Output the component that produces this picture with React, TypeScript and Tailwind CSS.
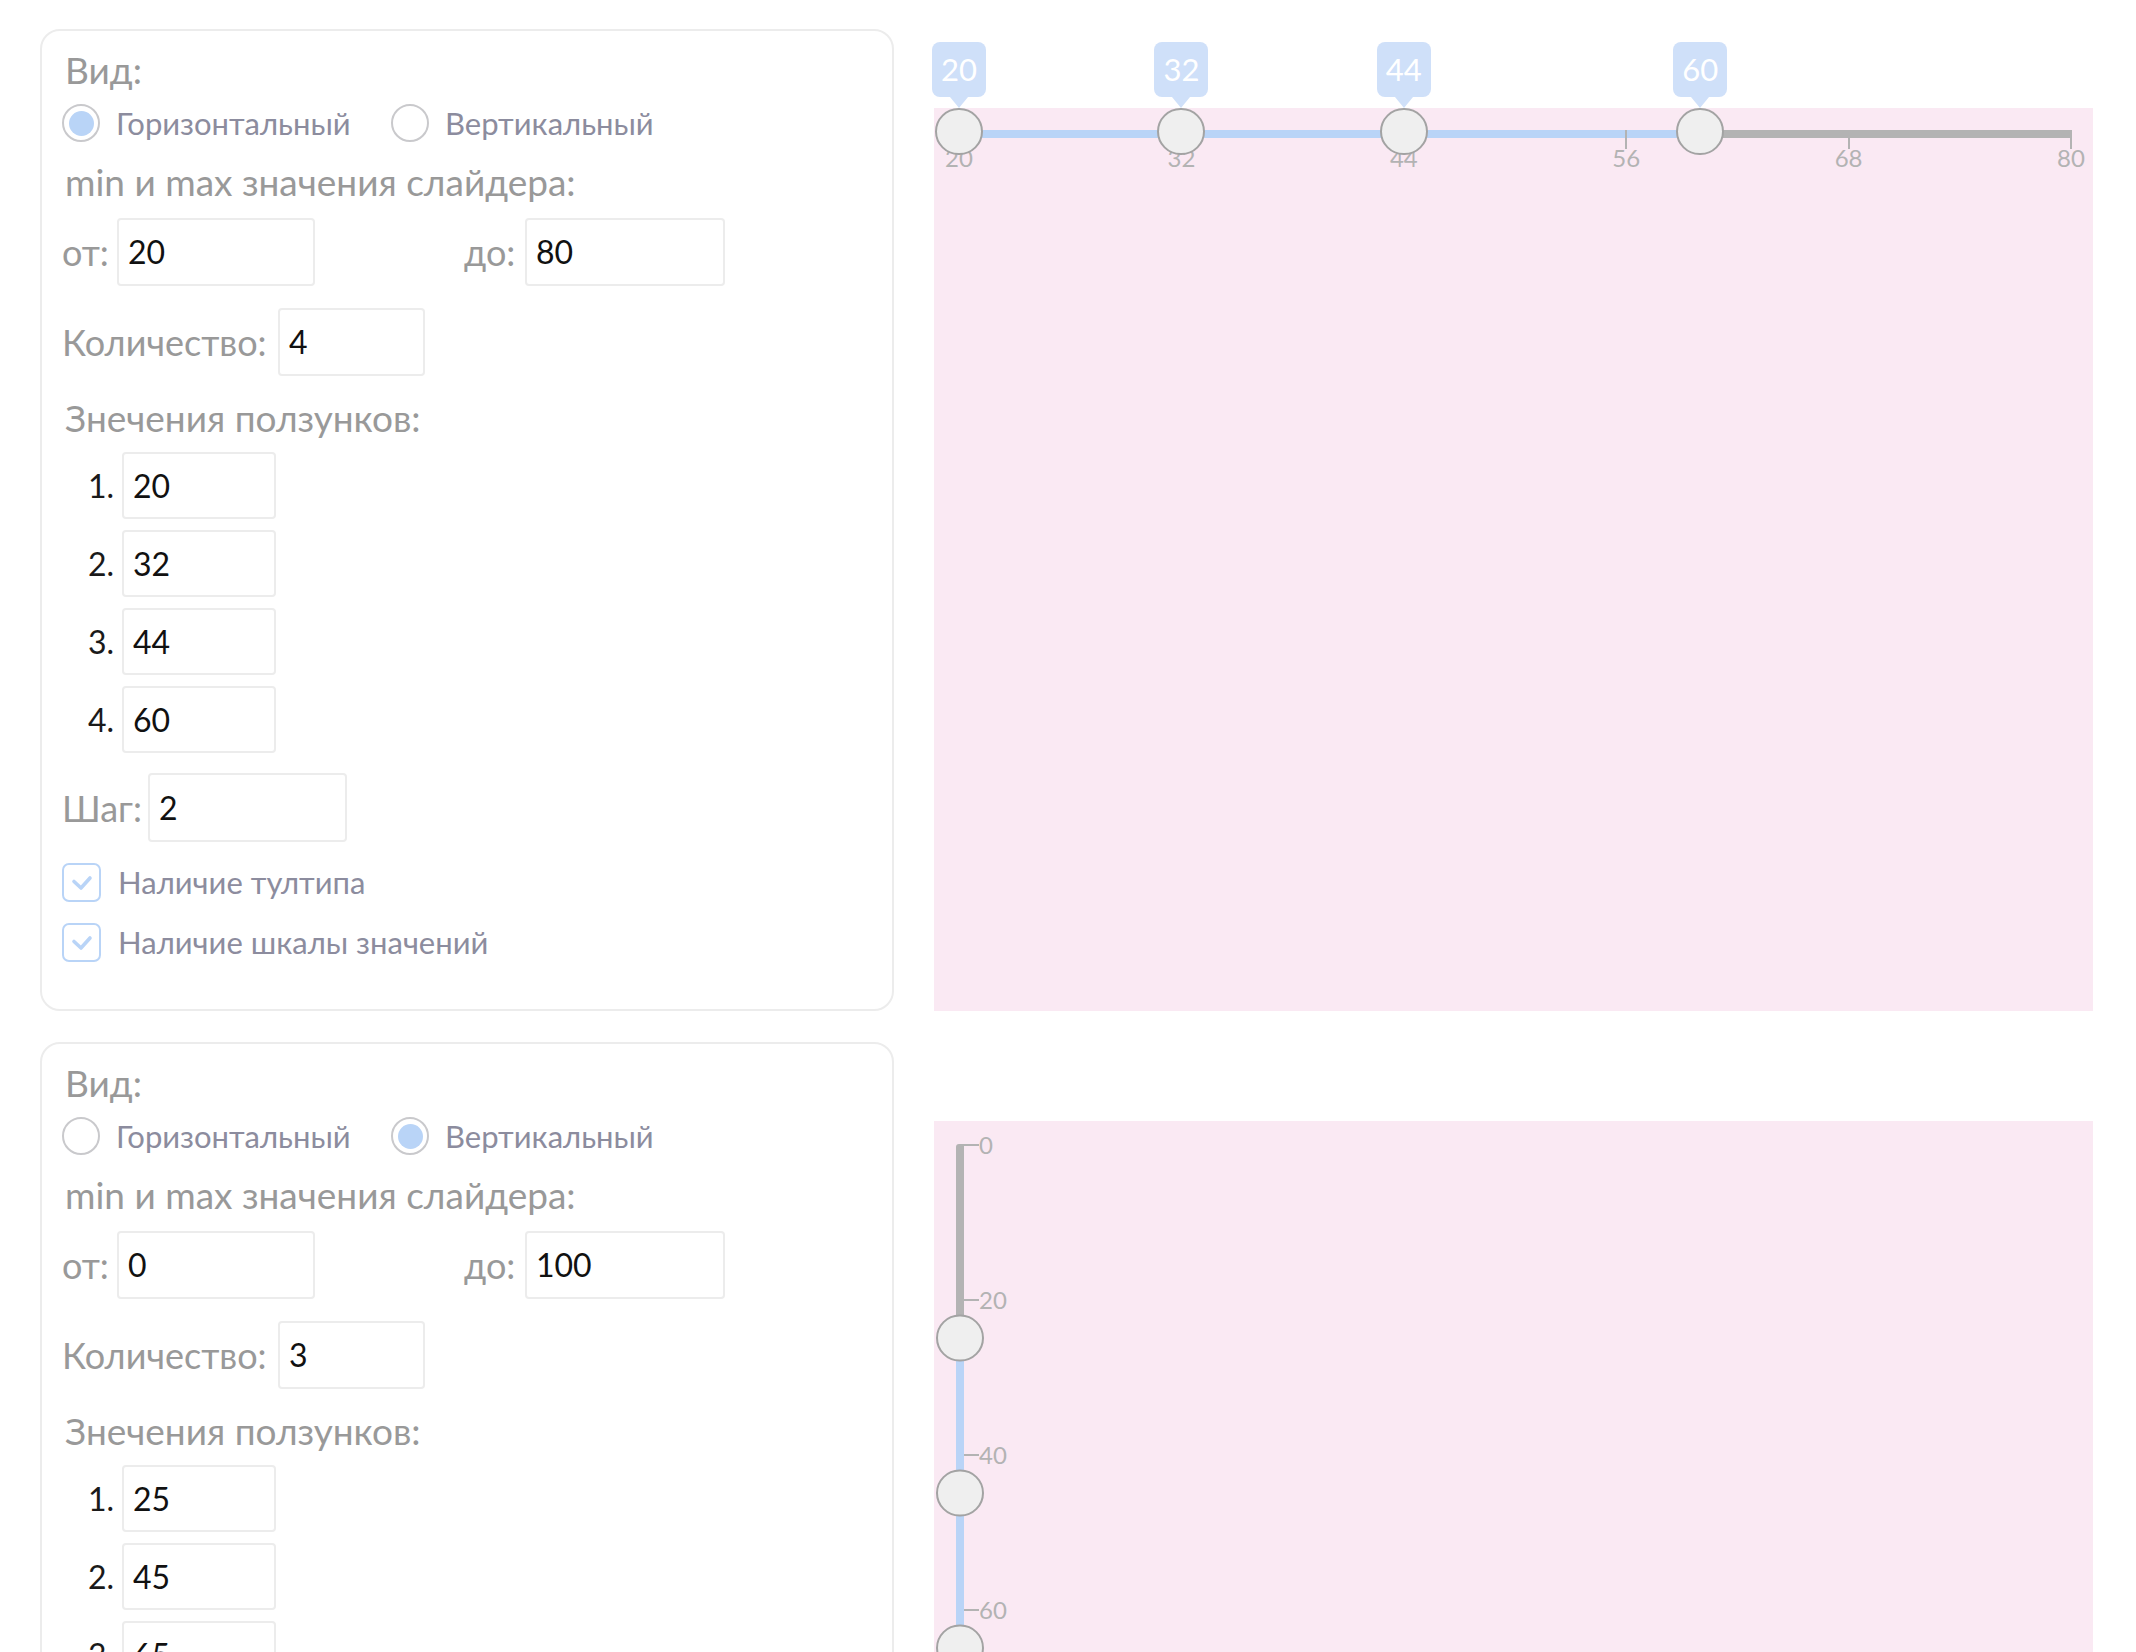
import React from 'react'

interface SliderConfig {
  vertical: boolean
  min: number
  max: number
  values: number[]
  step: number
  tooltip: boolean
  scale: boolean
  ticks: number[]
}

const configs: SliderConfig[] = [
  { vertical: false, min: 20, max: 80, values: [20, 32, 44, 60], step: 2, tooltip: true, scale: true, ticks: [20, 32, 44, 56, 68, 80] },
  { vertical: true, min: 0, max: 100, values: [25, 45, 65], step: 1, tooltip: false, scale: true, ticks: [0, 20, 40, 60, 80, 100] }
]

const font = { fontFamily: 'Lato, "Open Sans", sans-serif' }

function Radio({ checked, label }: { checked: boolean; label: string }) {
  return (
    <div className="flex items-center gap-[16px]">
      <span className="w-[38px] h-[38px] rounded-full border-2 border-[#c9c9cc] flex items-center justify-center bg-white">
        {checked && <span className="w-[25px] h-[25px] rounded-full bg-[#b9d4f7]" />}
      </span>
      <span className="text-[31px] leading-[38px] text-[#8c8c9e]">{label}</span>
    </div>
  )
}

function Checkbox({ label }: { label: string }) {
  return (
    <div className="flex items-center gap-[17px] h-[39px]">
      <span className="w-[39px] h-[39px] rounded-[7px] border-2 border-[#b9d4f7] flex items-center justify-center">
        <svg width="22" height="16" viewBox="0 0 22 16" fill="none">
          <path d="M3 6.5l7 6.5 9-10" stroke="#b9d4f7" strokeWidth="3.6" strokeLinecap="round" strokeLinejoin="round" />
        </svg>
      </span>
      <span className="text-[31px] leading-[39px] text-[#8c8c9e]">{label}</span>
    </div>
  )
}

function Field({ value, w, h = 'h-[68px]' }: { value: string | number; w: string; h?: string }) {
  return (
    <div className={`${w} ${h} border-2 border-[#ececec] rounded-[4px] bg-white flex items-center pl-[9px] text-[32px] text-[#111]`}>
      {value}
    </div>
  )
}

function Panel({ c }: { c: SliderConfig }) {
  return (
    <div className="w-[854px] shrink-0 border-2 border-[#ececec] rounded-[20px] pl-[20px] pt-[19px] pb-[47px] flex flex-col">
      <div className="h-[40px] leading-[40px] text-[37px] text-[#999999] ml-[3px]">Вид:</div>
      <div className="mt-[14px] h-[38px] flex">
        <div className="w-[329px]"><Radio checked={!c.vertical} label="Горизонтальный" /></div>
        <Radio checked={c.vertical} label="Вертикальный" />
      </div>
      <div className="mt-[20px] h-[40px] leading-[40px] text-[37px] text-[#999999] ml-[3px]">min и max значения слайдера:</div>
      <div className="mt-[16px] flex">
        <div className="w-[402px] flex items-center">
          <span className="w-[55px] text-[36px] text-[#999999]">от:</span>
          <Field value={c.min} w="w-[198px]" />
        </div>
        <div className="flex items-center">
          <span className="w-[61px] text-[36px] text-[#999999]">до:</span>
          <Field value={c.max} w="w-[200px]" />
        </div>
      </div>
      <div className="mt-[22px] flex items-center">
        <span className="w-[216px] text-[36px] text-[#999999]">Количество:</span>
        <Field value={c.values.length} w="w-[147px]" />
      </div>
      <div className="mt-[22px] h-[40px] leading-[40px] text-[37px] text-[#999999] ml-[3px]">Знечения ползунков:</div>
      <div className="mt-[14px] ml-[26px] flex flex-col gap-[11px]">
        {c.values.map((v, i) => (
          <div key={i} className="flex items-center">
            <span className="w-[34px] text-[32px] text-[#1a1a1a]">{i + 1}.</span>
            <Field value={v} w="w-[154px]" h="h-[67px]" />
          </div>
        ))}
      </div>
      <div className="mt-[20px] flex items-center">
        <span className="w-[86px] text-[36px] text-[#999999]">Шаг:</span>
        <Field value={c.step} w="w-[199px]" h="h-[69px]" />
      </div>
      <div className="mt-[21px]"><Checkbox label="Наличие тултипа" /></div>
      <div className="mt-[21px]"><Checkbox label="Наличие шкалы значений" /></div>
    </div>
  )
}

function HorizontalSlider({ c }: { c: SliderConfig }) {
  const pct = (v: number) => ((v - c.min) / (c.max - c.min)) * 100
  const first = pct(c.values[0])
  const last = pct(c.values[c.values.length - 1])
  return (
    <div className="flex-1 flex flex-col pt-[79px]">
      <div className="flex-1 bg-[#fae9f3] relative">
        <div className="absolute left-[25px] right-[22px] top-[22px] h-[8px]">
          <div className="absolute inset-y-0 bg-[#b3b3b3]" style={{ left: `${last}%`, right: 0 }} />
          <div className="absolute inset-y-0 bg-[#b9d4f7]" style={{ left: `${first}%`, width: `${last - first}%` }} />
          {c.scale && c.ticks.map(t => (
            <div key={t} className="absolute top-0" style={{ left: `${pct(t)}%` }}>
              <div className="absolute top-[0px] -left-[1px] w-[2px] h-[19px] bg-[#b3b3b3]" />
              <div className="absolute top-[15px] -translate-x-1/2 text-[24px] leading-[26px] text-[#b3b3b3]">{t}</div>
            </div>
          ))}
          {c.values.map((v, i) => (
            <div key={i} className="absolute top-0" style={{ left: `${pct(v)}%` }}>
              {c.tooltip && (
                <div className="absolute top-[-88px] -translate-x-1/2 flex flex-col items-center">
                  <div className="w-[54px] h-[55px] rounded-[8px] bg-[#cfe0f9] flex items-center justify-center text-[31px] text-white">{v}</div>
                  <div className="w-0 h-0 border-l-[9px] border-r-[9px] border-t-[11px] border-l-transparent border-r-transparent border-t-[#cfe0f9]" />
                </div>
              )}
              <div className="absolute top-[-22px] -translate-x-1/2 w-[48px] h-[47px] rounded-full bg-[#efefef] border-[2.5px] border-[#a3a3a3]" />
            </div>
          ))}
        </div>
      </div>
    </div>
  )
}

function VerticalSlider({ c }: { c: SliderConfig }) {
  const len = 775
  const pos = (v: number) => ((v - c.min) / (c.max - c.min)) * len
  const first = pos(c.values[0])
  const last = pos(c.values[c.values.length - 1])
  return (
    <div className="flex-1 flex flex-col pt-[79px]">
      <div className="flex-1 bg-[#fae9f3] relative min-h-[840px]">
        <div className="absolute left-[22px] top-[23px] w-[8px] h-[775px]">
          <div className="absolute inset-x-0 top-0 bg-[#b3b3b3] rounded-tl-[3px]" style={{ height: first }} />
          <div className="absolute inset-x-0 bg-[#b9d4f7]" style={{ top: first, height: last - first }} />
          <div className="absolute inset-x-0 bg-[#b3b3b3]" style={{ top: last, bottom: 0 }} />
          {c.scale && c.ticks.map(t => (
            <div key={t} className="absolute left-[8px] flex items-center -translate-y-1/2" style={{ top: pos(t) + 1 }}>
              <div className="w-[15px] h-[2px] bg-[#b3b3b3]" />
              <div className="text-[24px] leading-[26px] text-[#b3b3b3]">{t}</div>
            </div>
          ))}
          {c.values.map((v, i) => (
            <div key={i} className="absolute left-[4px] -translate-x-1/2 -translate-y-1/2 w-[48px] h-[47px] rounded-full bg-[#efefef] border-[2.5px] border-[#a3a3a3]" style={{ top: pos(v) }} />
          ))}
        </div>
      </div>
    </div>
  )
}

export default function App() {
  return (
    <div className="min-h-screen bg-white pl-[40px] pr-[43px] pt-[29px] pb-[40px] flex flex-col gap-[31px]" style={font}>
      {configs.map((c, i) => (
        <div key={i} className="flex gap-[40px]">
          <Panel c={c} />
          {c.vertical ? <VerticalSlider c={c} /> : <HorizontalSlider c={c} />}
        </div>
      ))}
    </div>
  )
}
